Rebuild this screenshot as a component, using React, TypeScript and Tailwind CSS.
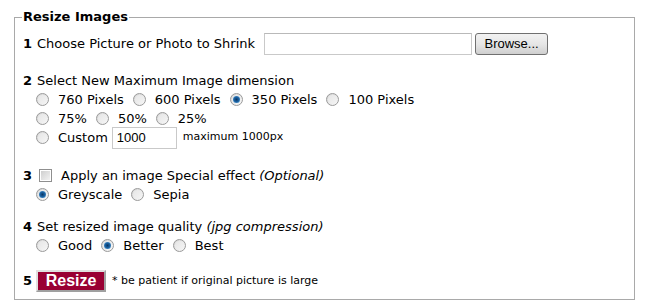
import React from 'react';

const Radio = ({ checked = false }: { checked?: boolean }) => (
  <span className="relative inline-flex w-[13px] h-[13px] shrink-0 items-center justify-center rounded-full border border-[#9a9a9a] bg-linear-to-br from-[#d4d4d4] to-[#fbfbfb]">
    <span className="w-[9px] h-[9px] rounded-full bg-linear-to-br from-[#e6e6e6] to-[#f4f4f4] flex items-center justify-center">
      {checked && (
        <span className="w-[7px] h-[7px] rounded-full bg-[radial-gradient(circle,#0a3663_0%,#1a5f9e_45%,#63b1ea_100%)]" />
      )}
    </span>
  </span>
);

const Option = ({ label, checked = false, gap = 'mr-[9px]' }: { label: string; checked?: boolean; gap?: string }) => (
  <span className={`inline-flex items-center ${gap}`}>
    <Radio checked={checked} />
    <span className="ml-[9px]">{label}</span>
  </span>
);

const Checkbox = () => (
  <span className="inline-flex w-[13px] h-[13px] shrink-0 border border-[#8f8f8f] bg-white p-[1px]">
    <span className="w-full h-full bg-linear-to-br from-[#cfcfcf] to-[#f2f2f2]" />
  </span>
);

const Num = ({ n }: { n: number }) => <b className="mr-[5px]">{n}</b>;

const App: React.FC = () => {
  return (
    <div className="w-[647px] h-[305px] bg-white text-[13px] text-black font-['Verdana','DejaVu_Sans',sans-serif] pt-[9px] pl-[14px]">
      <fieldset className="w-[621px] border border-[#a9a9a9] pl-[8px] pb-[7px]">
        <legend className="px-[1px] -ml-[1px] h-[16px] leading-[16px] font-bold">Resize Images</legend>

        <div className="mt-[8px] h-[22px] flex items-center">
          <Num n={1} />
          <span>Choose Picture or Photo to Shrink</span>
          <span className="ml-[9px] w-[208px] h-[22px] border border-[#c9c9c9] border-t-[#b9b9b9] bg-white" />
          <button className="ml-[3px] w-[73px] h-[22px] rounded-[3px] border border-[#707070] bg-linear-to-b from-[#f2f2f2] via-[#e6e6e6] to-[#cfcfcf] font-['Liberation_Sans',Arial,sans-serif] text-[13px] leading-[20px] text-black">
            Browse...
          </button>
        </div>

        <div className="mt-[16px] h-[19px] flex items-center">
          <Num n={2} />
          <span>Select New Maximum Image dimension</span>
        </div>
        <div className="pl-[13px]">
          <div className="h-[19px] flex items-center">
            <Option label="760 Pixels" />
            <Option label="600 Pixels" />
            <Option label="350 Pixels" checked />
            <Option label="100 Pixels" />
          </div>
          <div className="h-[19px] flex items-center">
            <Option label="75%" />
            <Option label="50%" />
            <Option label="25%" />
          </div>
          <div className="h-[19px] flex items-center">
            <Option label="Custom" gap="mr-[4px]" />
            <span className="w-[65px] h-[22px] border border-[#c9c9c9] bg-white pl-[4px] font-['Liberation_Sans',Arial,sans-serif] text-[13px] leading-[20px]">1000</span>
            <span className="ml-[6px] text-[11px]">maximum 1000px</span>
          </div>
        </div>

        <div className="mt-[19px] h-[19px] flex items-center">
          <b className="mr-[7px]">3</b>
          <Checkbox />
          <span className="ml-[9px]">
            Apply an image Special effect <i>(Optional)</i>
          </span>
        </div>
        <div className="pl-[13px] h-[19px] flex items-center">
          <Option label="Greyscale" checked />
          <Option label="Sepia" />
        </div>

        <div className="mt-[13px] h-[19px] flex items-center">
          <Num n={4} />
          <span>
            Set resized image quality <i>(jpg compression)</i>
          </span>
        </div>
        <div className="pl-[13px] h-[19px] flex items-center">
          <Option label="Good" />
          <Option label="Better" checked />
          <Option label="Best" />
        </div>

        <div className="mt-[15px] h-[22px] flex items-center">
          <b className="mr-[4px]">5</b>
          <button className="w-[70px] h-[22px] bg-[#990033] border-2 border-t-[#e0e0e0] border-l-[#e0e0e0] border-r-[#a0a0a0] border-b-[#a0a0a0] text-white font-bold font-['Liberation_Sans',Arial,sans-serif] text-[16px] leading-[18px]">
            Resize
          </button>
          <span className="ml-[6px] text-[11px]">* be patient if original picture is large</span>
        </div>
      </fieldset>
    </div>
  );
};

export default App;
